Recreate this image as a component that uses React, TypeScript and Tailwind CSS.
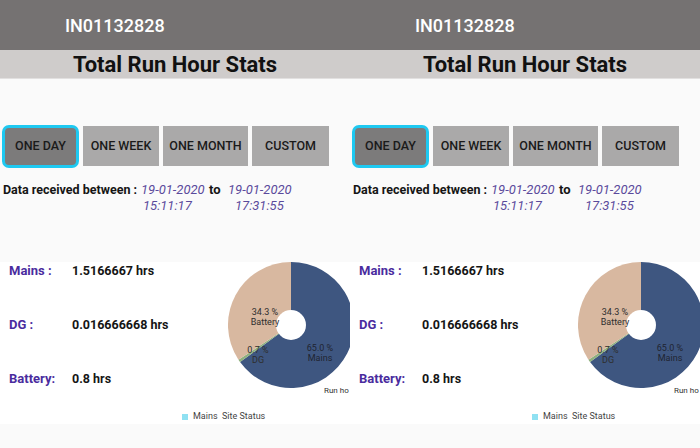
import React from "react";

const CX = 63;
const CY = 63;
const R = 63;

const pt = (deg: number) => {
  const a = (deg * Math.PI) / 180;
  return [CX + R * Math.sin(a), CY - R * Math.cos(a)];
};

const slice = (from: number, to: number) => {
  const [x1, y1] = pt(from);
  const [x2, y2] = pt(to);
  const large = to - from > 180 ? 1 : 0;
  return `M${CX},${CY} L${x1},${y1} A${R},${R} 0 ${large} 1 ${x2},${y2} Z`;
};

const RunHourPie = () => {
  const mainsEnd = 0.65 * 360;
  const dgEnd = mainsEnd + 0.007 * 360;
  return (
    <div className="relative w-[126px] h-[126px] shrink-0">
      <svg width="126" height="126" viewBox="0 0 126 126">
        <path d={slice(0, mainsEnd)} fill="#3e5680" />
        <path d={slice(mainsEnd, dgEnd)} fill="#8fb07e" />
        <path d={slice(dgEnd, 360)} fill="#d8b8a0" />
        <circle cx={CX} cy={CY} r="15" fill="#ffffff" />
      </svg>
      <div className="absolute left-[20px] top-[45px] w-[34px] text-center text-[9px] leading-[10px] text-[#2e2e2e]">
        34.3 %<br />Battery
      </div>
      <div className="absolute left-[18px] top-[83px] w-[24px] text-center text-[9px] leading-[10px] text-[#2e2e2e]">
        0.7 %<br />DG
      </div>
      <div className="absolute left-[76px] top-[81px] w-[32px] text-center text-[9px] leading-[10px] text-[#1e2430]">
        65.0 %<br />Mains
      </div>
      <div className="absolute left-[96px] top-[124px] text-[8px] leading-[10px] text-[#333] whitespace-nowrap">
        Run ho
      </div>
    </div>
  );
};

const Screen = () => {
  const tabs = [
    { label: "ONE WEEK", w: "w-[76px]" },
    { label: "ONE MONTH", w: "w-[85px]" },
    { label: "CUSTOM", w: "w-[77px]" },
  ];

  return (
    <div className="w-[350px] h-[448px] overflow-hidden bg-[#fafafa] shrink-0" style={{ fontFamily: "Roboto, 'Noto Sans', sans-serif" }}>
      <div className="h-[50px] bg-[#757272] flex items-center pl-[65px] text-white text-[18px] font-medium">
        IN01132828
      </div>
      <div className="h-[29px] bg-[#cfcccb] flex items-center justify-center text-[22px] font-bold text-[#111] border-b border-[#e2e0e0]">
        Total Run Hour Stats
      </div>

      <div className="mt-[45px] flex items-center gap-[4px] pl-[2px] h-[44px]">
        <div className="w-[77px] h-[43px] border-[3px] border-[#1ec9f1] rounded-[7px] bg-[#7c7b7b] flex items-center justify-center text-[12.5px] font-medium text-[#1a1a1a]">
          ONE DAY
        </div>
        {tabs.map((t) => (
          <div
            key={t.label}
            className={`${t.w} h-[40px] bg-[#aaa9a9] flex items-center justify-center text-[12.5px] font-medium text-[#1a1a1a]`}
          >
            {t.label}
          </div>
        ))}
      </div>

      <div className="mt-[14px] flex items-start pl-[3px] text-[13px] leading-[16px]">
        <span className="font-bold text-[#151515] w-[137px] text-[12.5px] whitespace-nowrap">Data received between :</span>
        <div className="italic text-[#5a4a9c] pl-[1px] w-[69px]">
          <div>19-01-2020</div>
          <div className="pl-[2px]">15:11:17</div>
        </div>
        <span className="font-bold text-[#151515] w-[19px]">to</span>
        <div className="italic text-[#5a4a9c]">
          <div>19-01-2020</div>
          <div className="pl-[7px]">17:31:55</div>
        </div>
      </div>

      <div className="mt-[48px] bg-white h-[162px] w-[380px] flex">
        <div className="w-[228px] shrink-0 flex flex-col">
          <div className="flex flex-col gap-[36px] pl-[9px] text-[12.5px] font-bold">
            <div className="flex h-[18px] items-center">
              <span className="w-[63px] text-[13px] text-[#4a2c9e]">Mains :</span>
              <span className="text-[#151515]">1.5166667 hrs</span>
            </div>
            <div className="flex h-[18px] items-center">
              <span className="w-[63px] text-[13px] text-[#4a2c9e]">DG :</span>
              <span className="text-[#151515]">0.016666668 hrs</span>
            </div>
            <div className="flex h-[18px] items-center">
              <span className="w-[63px] text-[13px] text-[#4a2c9e]">Battery:</span>
              <span className="text-[#151515]">0.8 hrs</span>
            </div>
          </div>
          <div className="mt-[22px] pl-[182px] flex items-center gap-[5px] text-[9px] text-[#444] whitespace-nowrap">
            <span className="w-[6px] h-[6px] bg-[#8fe1f2] shrink-0" />
            <span>Mains&nbsp; Site Status</span>
          </div>
        </div>
        <RunHourPie />
      </div>
    </div>
  );
};

export default function App() {
  return (
    <div className="w-[700px] h-[448px] flex overflow-hidden">
      <Screen />
      <Screen />
    </div>
  );
}
